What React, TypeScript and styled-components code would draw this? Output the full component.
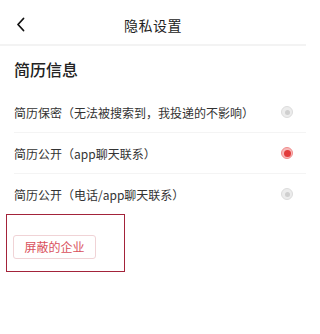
import styled, { createGlobalStyle } from "styled-components";

const GlobalStyle = createGlobalStyle`
  html, body {
    margin: 0;
    padding: 0;
    background: #fff;
  }
  body {
    font-family: "Noto Sans CJK SC", "Noto Sans", sans-serif;
    color: #333;
  }
`;

const Page = styled.div`
  width: 306px;
  height: 334px;
  background: #fff;
  overflow: hidden;
`;

const Header = styled.div`
  height: 44px;
  display: flex;
  align-items: center;
  justify-content: center;
  position: relative;
  border-bottom: 2px solid #f3f3f3;
`;

const BackButton = styled.div`
  position: absolute;
  left: 13px;
  top: 15px;
  width: 14px;
  height: 18px;
  display: flex;
  align-items: center;
  justify-content: center;
`;

const Title = styled.div`
  font-size: 14px;
  color: #222;
  letter-spacing: 0.5px;
  padding-top: 6px;
`;

const SectionTitle = styled.div`
  height: 46px;
  display: flex;
  align-items: center;
  padding-left: 14px;
  font-size: 16px;
  font-weight: 500;
  color: #222;
`;

const List = styled.div`
  display: flex;
  flex-direction: column;
`;

const Row = styled.div<{ $last?: boolean }>`
  height: 40px;
  display: flex;
  align-items: center;
  justify-content: space-between;
  margin-left: 14px;
  padding-right: 13px;
  border-bottom: ${(p) => (p.$last ? "none" : "1px solid #f4f4f4")};
  font-size: 12px;
  color: #333;
`;

const Radio = styled.span<{ $checked?: boolean }>`
  width: 12px;
  height: 12px;
  border-radius: 50%;
  box-sizing: border-box;
  display: flex;
  align-items: center;
  justify-content: center;
  background: ${(p) => (p.$checked ? "#f7b9b9" : "#ececec")};
  border: 1px solid ${(p) => (p.$checked ? "#f08c8c" : "#dcdcdc")};

  &::after {
    content: "";
    width: ${(p) => (p.$checked ? "7px" : "5px")};
    height: ${(p) => (p.$checked ? "7px" : "5px")};
    border-radius: 50%;
    background: ${(p) => (p.$checked ? "#e23b3b" : "#cfcfcf")};
  }
`;

const HighlightBox = styled.div`
  margin-left: 6px;
  width: 119px;
  height: 58px;
  box-sizing: border-box;
  border: 1px solid #a3233a;
  padding: 18px 0 0 6px;
`;

const BlockButton = styled.div`
  display: inline-flex;
  align-items: center;
  justify-content: center;
  width: 83px;
  height: 24px;
  box-sizing: border-box;
  border: 1px solid #f0d3d6;
  border-radius: 3px;
  font-size: 12px;
  color: #d9505c;
`;

const options = [
  { label: "简历保密（无法被搜索到，我投递的不影响）", checked: false },
  { label: "简历公开（app聊天联系）", checked: true },
  { label: "简历公开（电话/app聊天联系）", checked: false },
];

export default function App() {
  return (
    <>
      <GlobalStyle />
      <Page>
        <Header>
          <BackButton>
            <svg width="9" height="15" viewBox="0 0 9 15">
              <path
                d="M7.5 1.5 L2 7.5 L7.5 13.5"
                fill="none"
                stroke="#111"
                strokeWidth="1.8"
                strokeLinecap="round"
                strokeLinejoin="round"
              />
            </svg>
          </BackButton>
          <Title>隐私设置</Title>
        </Header>
        <SectionTitle>简历信息</SectionTitle>
        <List>
          {options.map((o, i) => (
            <Row key={o.label} $last={i === options.length - 1}>
              <span>{o.label}</span>
              <Radio $checked={o.checked} />
            </Row>
          ))}
        </List>
        <HighlightBox>
          <BlockButton>屏蔽的企业</BlockButton>
        </HighlightBox>
      </Page>
    </>
  );
}
